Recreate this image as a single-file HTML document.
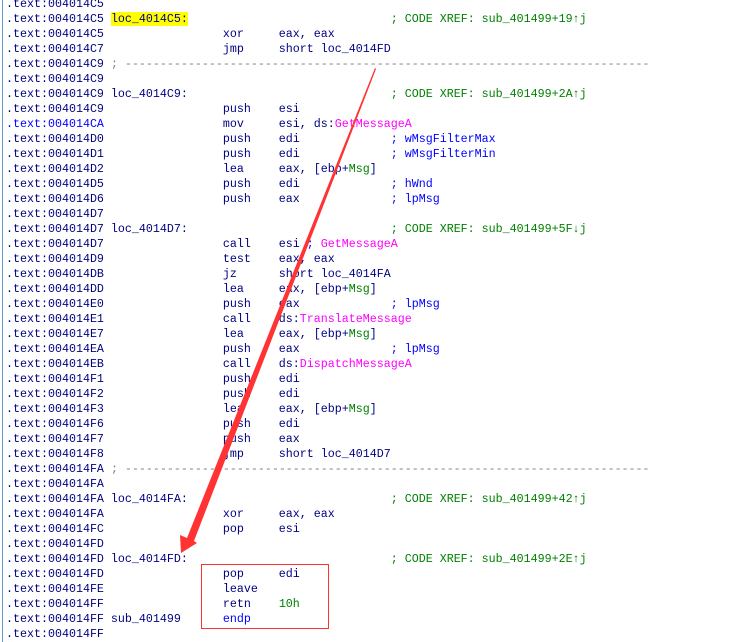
<!DOCTYPE html>
<html><head><meta charset="utf-8"><style>
html,body{margin:0;padding:0;background:#fff;width:731px;height:642px;overflow:hidden;position:relative}
.b{position:absolute;left:2px;top:0;width:1px;height:642px;background:#5b9bd5}
pre{position:absolute;left:6px;top:-3px;margin:0;font-family:"Liberation Mono",monospace;font-size:11.67px;line-height:15px;color:#000080;white-space:pre}
.g{color:#008000}.c{color:#0000ff}.m{color:#ff00ff}.d{color:#808080}.bl{color:#0000ff}
.y{background:#ffff00}
.box{position:absolute;left:201px;top:564px;width:126px;height:63px;border:1px solid #ff3030}
svg{position:absolute;left:0;top:0}
</style></head><body>
<div class="b"></div>
<pre>.text:004014C5
.text:004014C5 <span class="y">loc_4014C5:</span>                             <span class="g">; CODE XREF: sub_401499+19↑j</span>
.text:004014C5                 xor     eax, eax
.text:004014C7                 jmp     short loc_4014FD
.text:004014C9 <span class="d">; ---------------------------------------------------------------------------</span>
.text:004014C9
.text:004014C9 loc_4014C9:                             <span class="g">; CODE XREF: sub_401499+2A↑j</span>
.text:004014C9                 push    esi
<span class="bl">.text:004014CA</span>                 mov     esi, ds:<span class="m">GetMessageA</span>
.text:004014D0                 push    edi             <span class="c">; wMsgFilterMax</span>
.text:004014D1                 push    edi             <span class="c">; wMsgFilterMin</span>
.text:004014D2                 lea     eax, [ebp+<span class="g">Msg</span>]
.text:004014D5                 push    edi             <span class="c">; hWnd</span>
.text:004014D6                 push    eax             <span class="c">; lpMsg</span>
.text:004014D7
.text:004014D7 loc_4014D7:                             <span class="g">; CODE XREF: sub_401499+5F↓j</span>
.text:004014D7                 call    esi <span class="c">; </span><span class="m">GetMessageA</span>
.text:004014D9                 test    eax, eax
.text:004014DB                 jz      short loc_4014FA
.text:004014DD                 lea     eax, [ebp+<span class="g">Msg</span>]
.text:004014E0                 push    eax             <span class="c">; lpMsg</span>
.text:004014E1                 call    ds:<span class="m">TranslateMessage</span>
.text:004014E7                 lea     eax, [ebp+<span class="g">Msg</span>]
.text:004014EA                 push    eax             <span class="c">; lpMsg</span>
.text:004014EB                 call    ds:<span class="m">DispatchMessageA</span>
.text:004014F1                 push    edi
.text:004014F2                 push    edi
.text:004014F3                 lea     eax, [ebp+<span class="g">Msg</span>]
.text:004014F6                 push    edi
.text:004014F7                 push    eax
.text:004014F8                 jmp     short loc_4014D7
.text:004014FA <span class="d">; ---------------------------------------------------------------------------</span>
.text:004014FA
.text:004014FA loc_4014FA:                             <span class="g">; CODE XREF: sub_401499+42↑j</span>
.text:004014FA                 xor     eax, eax
.text:004014FC                 pop     esi
.text:004014FD
.text:004014FD loc_4014FD:                             <span class="g">; CODE XREF: sub_401499+2E↑j</span>
.text:004014FD                 pop     edi
.text:004014FE                 leave
.text:004014FF                 retn    <span class="g">10h</span>
.text:004014FF sub_401499      <span class="bl">endp</span>
.text:004014FF</pre>
<div class="box"></div>
<svg width="731" height="642"><polygon fill="#ff3333" points="375,68 376,69 194,541 197,543 181,553 180,535 187,538" /></svg>
</body></html>
